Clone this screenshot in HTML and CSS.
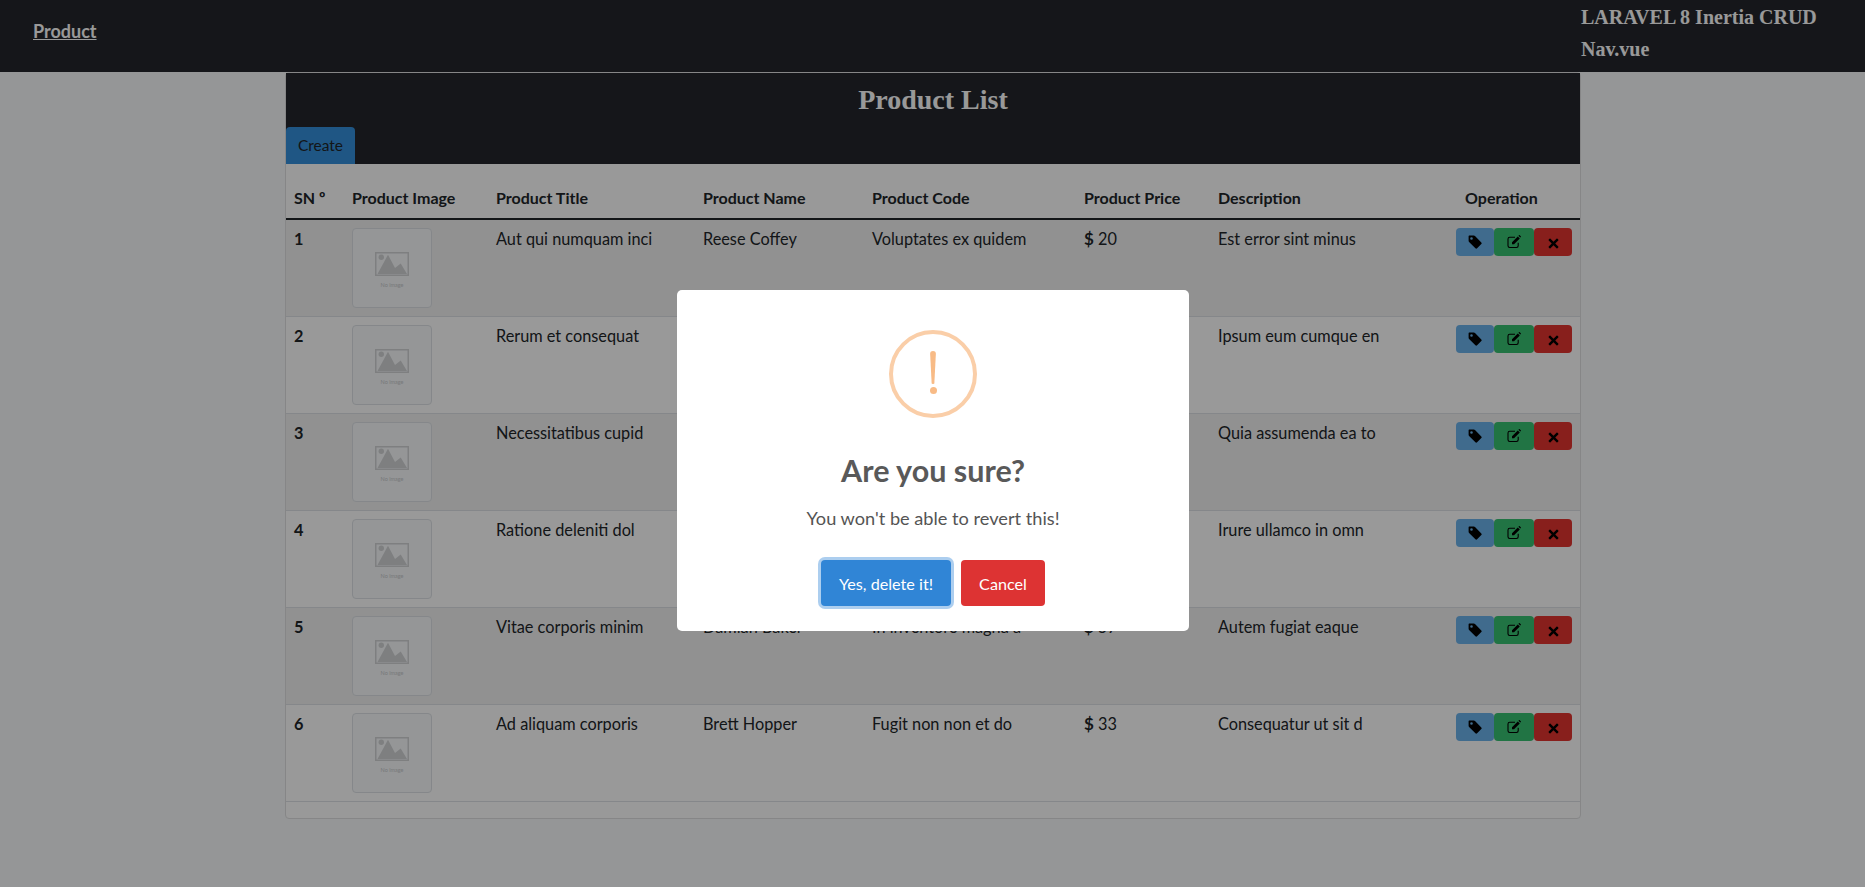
FILE: index.html
```html
<!DOCTYPE html>
<html lang="en">
<head>
  <meta charset="UTF-8">
  <title>Product List</title>
  <link rel="stylesheet" href="styles.css">
</head>
<body>

  <svg class="icon-defs" width="0" height="0">
    <symbol id="i-tag" viewBox="0 0 14 14">
      <path fill-rule="evenodd" d="M1.2 .6h4.6c.5 0 .9.2 1.2.5l6.3 6.3c.5.5.5 1.2 0 1.7l-4.2 4.2c-.5.5-1.2.5-1.700 0L1.100 7C.8 6.700 .6 6.300 .6 5.800V1.200c0-.3.3-.6.6-.6zM3.500 2.200a1.300 1.300 0 1 0 0 2.600 1.300 1.300 0 0 0 0-2.600z"/>
    </symbol>
    <symbol id="i-edit" viewBox="0 0 14 14">
      <path fill="none" stroke="#000" stroke-width="1.100" d="M11.200 7.800v3c0 1-.7 1.700-1.700 1.700H2.700c-1 0-1.700-.7-1.700-1.700V4c0-1 .7-1.700 1.700-1.700h5.300"/>
      <path d="M5 7.200 10.800 1.400l2 2L7 9.200H5zM11.400.8l.6-.6c.2-.2.5-.2.700 0l1.100 1.100c.2.2.2.5 0 .7l-.6.6z"/>
    </symbol>
    <symbol id="i-times" viewBox="0 0 12 12">
      <path d="M2.700 .8 6 4.100 9.300 .8c.3-.3.7-.3 1 0l.9.9c.3.3.3.7 0 1L7.900 6l3.300 3.300c.3.3.3.7 0 1l-.9.9c-.3.3-.7.3-1 0L6 7.900l-3.300 3.300c-.3.3-.7.3-1 0l-.9-.9c-.3-.3-.3-.7 0-1L4.100 6 .8 2.700c-.3-.3-.3-.7 0-1l.9-.9c.3-.3.7-.3 1 0z"/>
    </symbol>
    <symbol id="i-noimage" viewBox="0 0 34 24">
      <path fill="none" stroke="#d2d4d6" stroke-width="1.500" d="M.75 .75h32.500v22.500H.75z"/>
      <circle cx="6.300" cy="5.300" r="2.700" fill="#d2d4d6"/>
      <path fill="#d2d4d6" d="M2.500 22 13 2.700 20 16l5.700-4.500L32 22z"/>
    </symbol>
  </svg>

  <nav class="navbar">
    <a class="nav-link" href="#">Product</a>
    <div class="nav-note">
      <h5>LARAVEL 8 Inertia CRUD</h5>
      <h5>Nav.vue</h5>
    </div>
  </nav>

  <div class="card">
    <div class="card-head">
      <h2>Product List</h2>
      <a class="btn-create" href="#">Create</a>
    </div>

    <table class="product-table">
      <colgroup>
        <col class="c-sn"><col class="c-image"><col class="c-title"><col class="c-name">
        <col class="c-code"><col class="c-price"><col class="c-desc"><col class="c-op">
      </colgroup>
      <thead>
        <tr>
          <th>SN º</th>
          <th>Product Image</th>
          <th>Product Title</th>
          <th>Product Name</th>
          <th>Product Code</th>
          <th>Product Price</th>
          <th>Description</th>
          <th class="th-op">Operation</th>
        </tr>
      </thead>
      <tbody id="rows"></tbody>
    </table>
  </div>

  <div class="overlay">
    <div class="modal">
      <div class="warn-icon"><span class="warn-bar"></span><span class="warn-dot"></span></div>
      <h2 class="modal-title">Are you sure?</h2>
      <p class="modal-text">You won't be able to revert this!</p>
      <div class="modal-actions">
        <button class="btn-confirm">Yes, delete it!</button>
        <button class="btn-cancel">Cancel</button>
      </div>
    </div>
  </div>

  <script>
    const products = [
      ['Aut qui numquam inci', 'Reese Coffey', 'Voluptates ex quidem', 20, 'Est error sint minus'],
      ['Rerum et consequat', 'Kibo Stone', 'Sit quia dolore aute', 45, 'Ipsum eum cumque en'],
      ['Necessitatibus cupid', 'Ila Wood', 'Nulla sed quis esse', 72, 'Quia assumenda ea to'],
      ['Ratione deleniti dol', 'Amena Pratt', 'Tempor enim ut quia', 18, 'Irure ullamco in omn'],
      ['Vitae corporis minim', 'Damian Baker', 'In inventore magna a', 57, 'Autem fugiat eaque'],
      ['Ad aliquam corporis', 'Brett Hopper', 'Fugit non non et do', 33, 'Consequatur ut sit d']
    ];

    let html = '';
    products.forEach((p, i) => {
      html += `<tr>
        <td class="td-sn">${i + 1}</td>
        <td><div class="thumb"><svg class="thumb-pic"><use href="#i-noimage"></use></svg><span class="thumb-text">No image</span></div></td>
        <td>${p[0]}</td>
        <td>${p[1]}</td>
        <td>${p[2]}</td>
        <td><b class="dollar">$</b> ${p[3]}</td>
        <td>${p[4]}</td>
        <td><div class="ops">
          <a class="op op-tag" href="#"><svg class="ic-tag"><use href="#i-tag"></use></svg></a>
          <a class="op op-edit" href="#"><svg class="ic-edit"><use href="#i-edit"></use></svg></a>
          <a class="op op-del" href="#"><svg class="ic-times"><use href="#i-times"></use></svg></a>
        </div></td>
      </tr>`;
    });
    document.getElementById('rows').innerHTML = html;
  </script>
</body>
</html>
```

FILE: styles.css
```css
* {
  box-sizing: border-box;
}

body {
  margin: 0;
  min-height: 100vh;
  background: #f8fafc;
  color: #212529;
  font-family: Lato, sans-serif;
  font-size: 16.3px;
  line-height: 21px;
}

.icon-defs {
  position: absolute;
}

.navbar {
  height: 72px;
  background: #23262c;
  display: flex;
  justify-content: space-between;
  padding-left: 33px;
}

.nav-link {
  color: #fff;
  font-size: 18px;
  font-weight: 700;
  line-height: 28px;
  margin-top: 17px;
}

.nav-note {
  width: 284px;
  padding-top: 3px;
}

.nav-note h5 {
  margin: 0;
  height: 32px;
  color: #fff;
  font-family: "Liberation Serif", serif;
  font-size: 20px;
  font-weight: 700;
  line-height: 28px;
}

.card {
  width: 1296px;
  height: 747px;
  margin-left: 285px;
  background: #fff;
  border: 1px solid #dfe0e1;
  border-radius: 4px;
}

.card-head {
  height: 91px;
  background: #23262c;
  display: flex;
  flex-direction: column;
  align-items: flex-start;
}

.card-head h2 {
  width: 100%;
  height: 54px;
  margin: 0;
  color: #fff;
  text-align: center;
  font-family: "Liberation Serif", serif;
  font-size: 28px;
  font-weight: 700;
  line-height: 54px;
}

.btn-create {
  width: 69px;
  height: 37px;
  background: #3490dc;
  color: #212529;
  border-radius: 4px 4px 0 0;
  font-size: 15.5px;
  line-height: 36px;
  text-align: center;
  text-decoration: none;
}

.product-table {
  width: 100%;
  table-layout: fixed;
  border-collapse: collapse;
}

.c-sn { width: 58px; }
.c-image { width: 144px; }
.c-title { width: 207px; }
.c-name { width: 169px; }
.c-code { width: 212px; }
.c-price { width: 134px; }
.c-desc { width: 238px; }

.product-table th {
  height: 55px;
  padding: 0 8px 10px;
  vertical-align: bottom;
  text-align: left;
  font-size: 16px;
  font-weight: 700;
  border-bottom: 2px solid #212529;
}

.product-table .th-op {
  padding-left: 17px;
}

.product-table td {
  padding: 8px;
  vertical-align: top;
  border-bottom: 1px solid #dee2e6;
}

.product-table tbody tr:nth-child(odd) {
  background: rgba(0, 0, 0, 0.05);
}

.td-sn {
  font-weight: 700;
}

.dollar {
  font-size: 17px;
}

.thumb {
  width: 80px;
  height: 80px;
  background: #f8fafc;
  border: 1px solid #dee2e6;
  border-radius: 4px;
  display: flex;
  flex-direction: column;
  align-items: center;
  padding-top: 23px;
}

.thumb-pic {
  width: 34px;
  height: 24px;
}

.thumb-text {
  color: #c8cacc;
  font-size: 5.5px;
  line-height: 7px;
  margin-top: 6px;
}

.ops {
  display: flex;
}

.op {
  height: 28px;
  border-radius: 4px;
  display: flex;
  align-items: center;
  justify-content: center;
}

.op-tag { width: 38px; background: #6cb2eb; }
.op-edit { width: 41px; background: #38c172; }
.op-del { width: 38px; background: #e3342f; }

.ic-tag { width: 14px; height: 14px; }
.ic-edit { width: 14px; height: 14px; }
.ic-times { width: 11px; height: 11px; margin-top: 2px; }

.overlay {
  position: fixed;
  inset: 0;
  background: rgba(0, 0, 0, 0.4);
}

.modal {
  position: absolute;
  left: 677px;
  top: 290px;
  width: 512px;
  height: 341px;
  background: #fff;
  border-radius: 5px;
  display: flex;
  flex-direction: column;
  align-items: center;
  padding-top: 40px;
}

.warn-icon {
  width: 88px;
  height: 88px;
  border: 4px solid #facea8;
  border-radius: 50%;
  display: flex;
  flex-direction: column;
  align-items: center;
  padding-top: 17px;
}

.warn-bar {
  width: 6px;
  height: 33px;
  background: #f8bb86;
  border-radius: 3px;
  clip-path: polygon(0 0, 100% 0, 72% 100%, 28% 100%);
}

.warn-dot {
  width: 7px;
  height: 7px;
  margin-top: 3px;
  background: #f8bb86;
  border-radius: 50%;
}

.modal-title {
  margin: 31px 0 0;
  color: #595959;
  font-size: 30.5px;
  font-weight: 700;
  line-height: 42px;
}

.modal-text {
  margin: 14px 0 0;
  color: #545454;
  font-size: 18.2px;
  line-height: 26px;
}

.modal-actions {
  display: flex;
  gap: 10px;
  margin-top: 29px;
}

.modal-actions button {
  height: 46px;
  border: 0;
  border-radius: 4px;
  color: #fff;
  font-family: inherit;
  font-size: 16.2px;
}

.btn-confirm {
  width: 130px;
  background: #3085d6;
  box-shadow: 0 0 0 3px rgba(48, 133, 214, 0.4);
}

.btn-cancel {
  width: 84px;
  background: #dd3333;
}
```
